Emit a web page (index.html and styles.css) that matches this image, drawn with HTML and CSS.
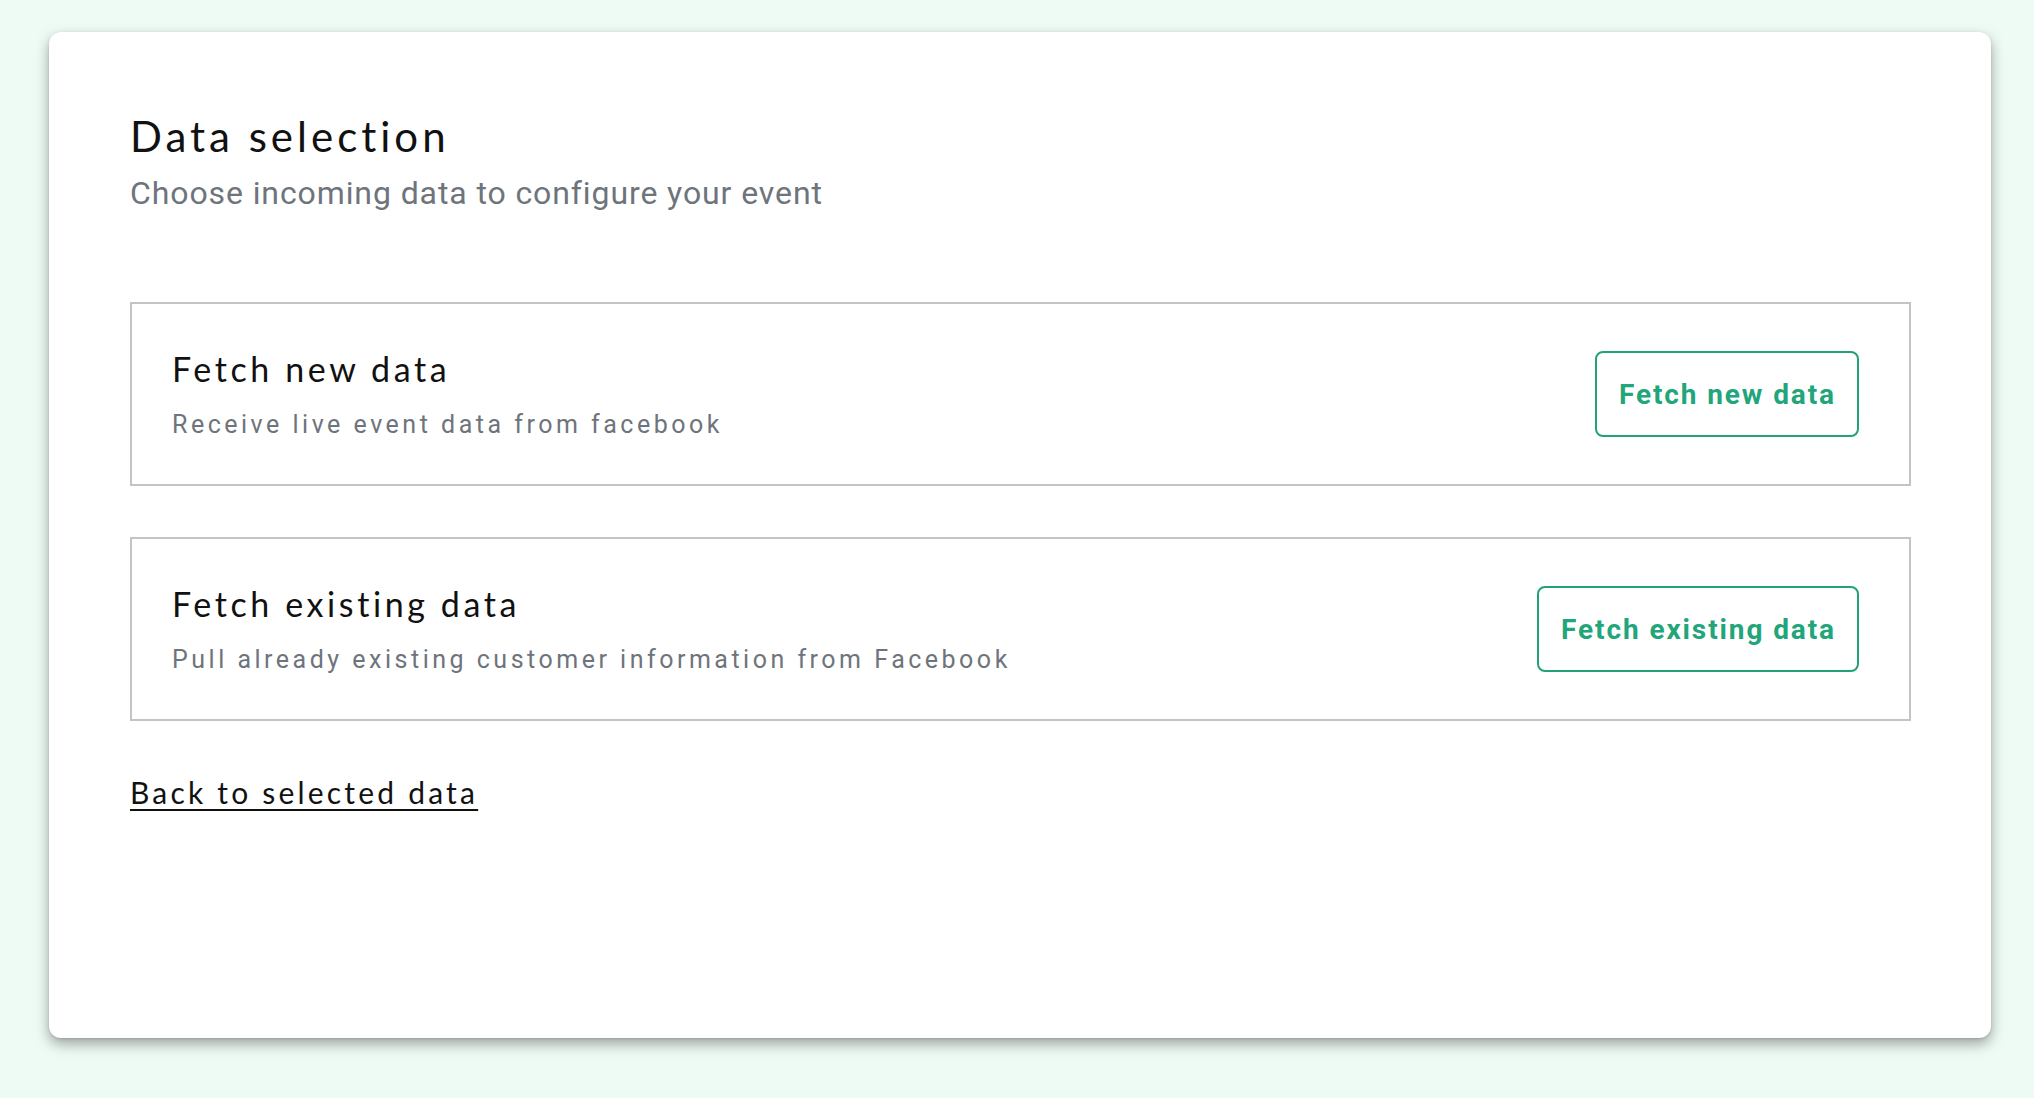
FILE: index.html
```html
<!DOCTYPE html>
<html lang="en">
<head>
<meta charset="utf-8">
<title>Data selection</title>
<link rel="stylesheet" href="styles.css">
</head>
<body>
<main class="card">
  <h1 class="title">Data selection</h1>
  <p class="subtitle">Choose incoming data to configure your event</p>

  <section class="option">
    <div class="option-text">
      <h2 class="option-title">Fetch new data</h2>
      <p class="option-desc">Receive live event data from facebook</p>
    </div>
    <button class="btn" type="button">Fetch new data</button>
  </section>

  <section class="option option-second">
    <div class="option-text">
      <h2 class="option-title">Fetch existing data</h2>
      <p class="option-desc">Pull already existing customer information from Facebook</p>
    </div>
    <button class="btn" type="button">Fetch existing data</button>
  </section>

  <a class="back-link" href="#">Back to selected data</a>
</main>
</body>
</html>
```

FILE: styles.css
```css
html, body {
  margin: 0;
  padding: 0;
}

body {
  background: #eefaf4;
  padding: 32px 43px 60px 49px;
  font-family: "Lato", "Noto Sans", sans-serif;
}

.card {
  box-sizing: border-box;
  width: 1942px;
  height: 1006px;
  background: #ffffff;
  border-radius: 12px;
  box-shadow: 0 6px 14px rgba(0, 0, 0, 0.34), 0 1px 3px rgba(0, 0, 0, 0.12);
  padding: 79px 80px 0 81px;
  display: flex;
  flex-direction: column;
  align-items: flex-start;
}

.title {
  margin: 0;
  font-family: "Lato", sans-serif;
  font-weight: 400;
  font-size: 42px;
  line-height: 50px;
  letter-spacing: 4px;
  color: #111111;
}

.subtitle {
  margin: 14px 0 0;
  font-family: "Roboto", sans-serif;
  font-size: 32px;
  line-height: 36px;
  letter-spacing: 0.9px;
  color: #6e747c;
}

.option {
  box-sizing: border-box;
  align-self: stretch;
  height: 184px;
  margin-top: 91px;
  border: 2px solid #c4c4c4;
  padding: 0 50px 0 40px;
  display: flex;
  align-items: center;
  justify-content: space-between;
}

.option-second {
  margin-top: 51px;
}

.option-text {
  display: flex;
  flex-direction: column;
}

.option-title {
  margin: 0;
  font-family: "Lato", sans-serif;
  font-weight: 400;
  font-size: 34px;
  line-height: 40px;
  letter-spacing: 3.6px;
  color: #111111;
}

.option-desc {
  margin: 21px 0 0;
  font-family: "Roboto", sans-serif;
  font-size: 25px;
  line-height: 30px;
  letter-spacing: 3.5px;
  color: #6e747c;
}

.btn {
  box-sizing: border-box;
  height: 86px;
  padding: 0 21px 0 22px;
  background: #ffffff;
  border: 2px solid #23a27a;
  border-radius: 8px;
  font-family: "Roboto", sans-serif;
  font-weight: 700;
  font-size: 28px;
  letter-spacing: 1.9px;
  color: #22a57b;
  cursor: pointer;
}

.back-link {
  margin-top: 53px;
  font-family: "Lato", sans-serif;
  font-size: 30px;
  line-height: 36px;
  letter-spacing: 3.2px;
  color: #111111;
  text-decoration: underline;
  text-decoration-thickness: 2px;
  text-underline-offset: 5px;
}
```
